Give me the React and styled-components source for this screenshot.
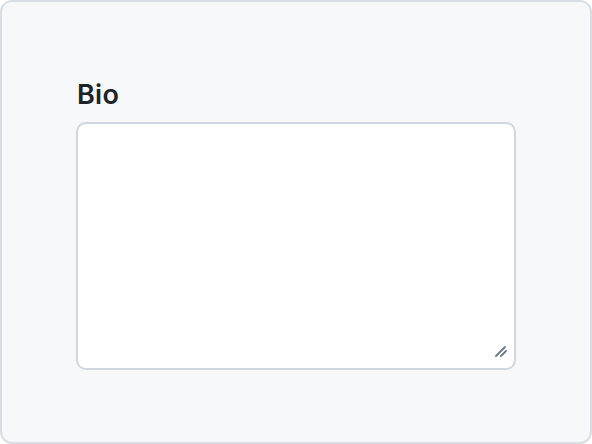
import styled, { createGlobalStyle } from 'styled-components'

const GlobalStyle = createGlobalStyle`
	html, body {
		margin: 0;
		padding: 0;
		background: #ffffff;
	}
	* {
		box-sizing: border-box;
	}
`

const App = () => {
	return (
		<>
			<GlobalStyle />
			<Frame>
				<Field>
					<Label htmlFor="bio">Bio</Label>
					<InputWrap>
						<TextArea id="bio" />
						<Grip width="12" height="12" viewBox="0 0 12 12">
							<path d="M1 11 L10 2 M6 11 L11 6" />
						</Grip>
					</InputWrap>
				</Field>
			</Frame>
		</>
	)
}

export default App

const Frame = styled.div`
	width: 592px;
	height: 444px;
	display: flex;
	align-items: center;
	justify-content: center;
	background: #f6f8fa;
	border: 2px solid #d8dee4;
	border-radius: 12px;
	font-family: Inter, sans-serif;
`
const Field = styled.div`
	display: flex;
	flex-direction: column;
	gap: 9px;
	width: 440px;
	margin-top: 2px;
`
const Label = styled.label`
	font-size: 27px;
	line-height: 36px;
	font-weight: 600;
	letter-spacing: 0.3px;
	color: #1f2328;
	padding: 1px 0 0 1px;
`
const InputWrap = styled.div`
	position: relative;
	width: 440px;
	height: 248px;
`
const TextArea = styled.textarea`
	display: block;
	width: 100%;
	height: 100%;
	border: 2px solid #d0d7de;
	border-radius: 10px;
	background: #ffffff;
	font-family: inherit;
	font-size: 16px;
	padding: 8px 12px;
	outline: none;
	resize: none;
`
const Grip = styled.svg`
	position: absolute;
	right: 9px;
	bottom: 13px;
	pointer-events: none;

	path {
		stroke: #6e7781;
		stroke-width: 1.8;
		stroke-linecap: round;
		fill: none;
	}
`
